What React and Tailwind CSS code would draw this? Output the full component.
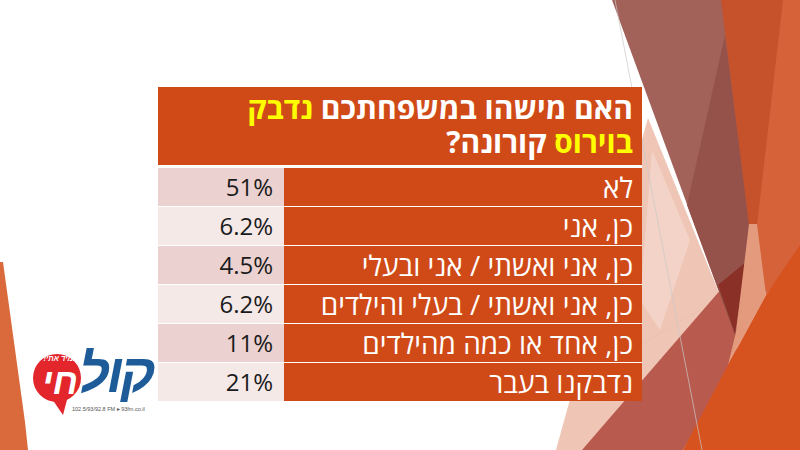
import React from 'react';

// Survey results slide: orange table over a faceted background.
const ROWS = [
  { label: 'לא', value: '51%' },
  { label: 'כן, אני', value: '6.2%' },
  { label: 'כן, אני ואשתי / אני ובעלי', value: '4.5%' },
  { label: 'כן, אני ואשתי / בעלי והילדים', value: '6.2%' },
  { label: 'כן, אחד או כמה מהילדים', value: '11%' },
  { label: 'נדבקנו בעבר', value: '21%' },
];

function Facets() {
  return (
    <svg className="absolute inset-0" width="800" height="450" viewBox="0 0 800 450">
      {/* left edge strip */}
      <polygon points="0,262 3,262 25,422 28,450 0,450" fill="#da6a3c" />
      {/* right side facets */}
      <polygon points="648,118 735,332 582,450 556,450" fill="#efc5b5" />
      <polygon points="652,150 690,240 660,330 640,300" fill="#f3d3c7" />
      <polygon points="582,450 748,258 735,362 683,450" fill="#b95a4e" />
      <polygon points="612,0 722,0 750,225 735,335" fill="#a2625a" />
      <polygon points="725,35 750,225 735,335 687,205" fill="#95524a" />
      <polygon points="718,285 746,262 735,334" fill="#8a3027" />
      <polygon points="760,0 800,0 800,250 766,295 752,225" fill="#d6623a" />
      <polygon points="721,0 783,0 757,225 749,225" fill="#c5522b" />
      <polygon points="749,224 757,224 766,295 728,365 736,332" fill="#e49b7d" />
      <polygon points="800,245 800,450 683,450 728,365 766,295" fill="#d6521f" />
      <line x1="615" y1="0" x2="702" y2="450" stroke="#c8c8c8" strokeWidth="0.7" />
      <line x1="640" y1="345" x2="700" y2="310" stroke="#e8c0b0" strokeWidth="0.6" />
    </svg>
  );
}

function Logo() {
  return (
    <div className="absolute left-[33px] top-[340px] flex flex-col font-['Liberation_Sans',sans-serif]">
      <div className="flex items-start">
        <div className="relative z-10 flex h-[76px] w-[48px] flex-col items-center">
          <svg className="absolute left-0 top-0" width="48" height="76" viewBox="0 0 48 76">
            <circle cx="24" cy="38" r="24" fill="#e2262c" />
            <polygon points="17,56 35,56 30,75" fill="#e2262c" />
          </svg>
          <div dir="rtl" className="relative mt-[15px] ml-[8px] whitespace-nowrap text-[7.5px] leading-none font-bold italic text-white">
            תמיד אתי!
          </div>
          <div dir="rtl" className="relative mt-[1px] ml-[6px] whitespace-nowrap text-[36px] leading-none font-black italic text-white">
            חי
          </div>
        </div>
        <div dir="rtl" className="-ml-[2px] mt-[6px] text-[54px] leading-none font-black italic tracking-[-3px] text-[#1d5c99]">
          קול
        </div>
      </div>
      <div className="-mt-[9px] ml-[39px] whitespace-nowrap text-[5.5px] leading-none text-[#555]">
        102.5/93/92.8 FM ▸ 93fm.co.il
      </div>
    </div>
  );
}

export default function App() {
  return (
    <div className="relative h-[450px] w-[800px] overflow-hidden bg-white font-['Open_Sans','Liberation_Sans',sans-serif]">
      <Facets />
      <Logo />
      <div className="relative ml-[158px] pt-[87px] w-[484px]">
        <div className="flex flex-col gap-[3px] bg-white">
          <div
            dir="rtl"
            className="h-[78px] bg-[#d04a18] pr-[9px] pt-[4px] text-[30px] leading-[34px] font-bold text-white"
          >
            <div>
              האם מישהו במשפחתכם <span className="text-[#ffff00]">נדבק</span>
            </div>
            <div>
              <span className="text-[#ffff00]">בוירוס</span> קורונה?
            </div>
          </div>
          <div className="flex flex-col gap-px">
            {ROWS.map((row, i) => (
              <div key={i} className="flex h-[38px]">
                <div
                  className={
                    'flex w-[126px] items-center justify-end pr-[11px] text-[24px] text-[#1b1b1b] ' +
                    (i % 2 === 0 ? 'bg-[#ebd1cf]' : 'bg-[#f5e9e8]')
                  }
                >
                  {row.value}
                </div>
                <div
                  dir="rtl"
                  className="flex flex-1 items-center bg-[#d04a18] pr-[9px] text-[28px] text-white"
                >
                  {row.label}
                </div>
              </div>
            ))}
          </div>
        </div>
      </div>
    </div>
  );
}
